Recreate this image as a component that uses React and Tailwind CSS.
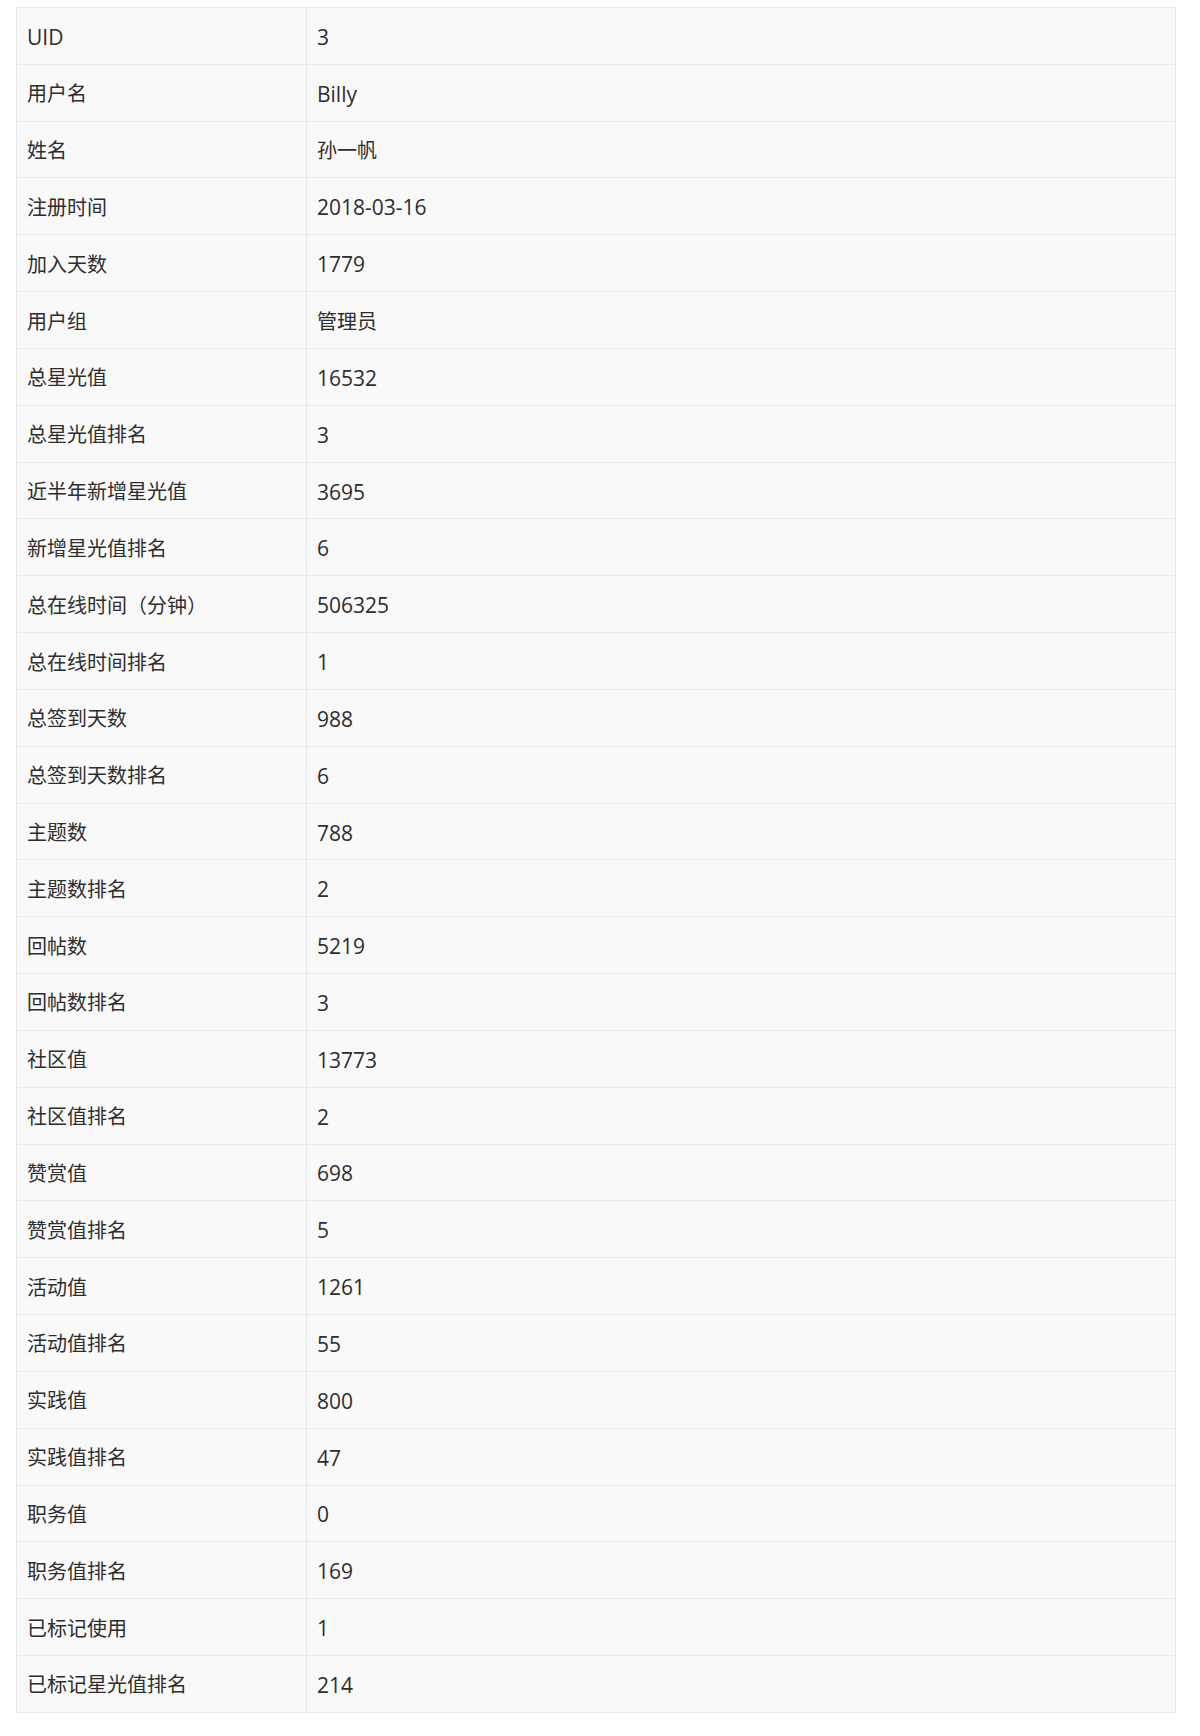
import React from "react";

const rows = [
  ["UID", "3"],
  ["用户名", "Billy"],
  ["姓名", "孙一帆"],
  ["注册时间", "2018-03-16"],
  ["加入天数", "1779"],
  ["用户组", "管理员"],
  ["总星光值", "16532"],
  ["总星光值排名", "3"],
  ["近半年新增星光值", "3695"],
  ["新增星光值排名", "6"],
  ["总在线时间（分钟）", "506325"],
  ["总在线时间排名", "1"],
  ["总签到天数", "988"],
  ["总签到天数排名", "6"],
  ["主题数", "788"],
  ["主题数排名", "2"],
  ["回帖数", "5219"],
  ["回帖数排名", "3"],
  ["社区值", "13773"],
  ["社区值排名", "2"],
  ["赞赏值", "698"],
  ["赞赏值排名", "5"],
  ["活动值", "1261"],
  ["活动值排名", "55"],
  ["实践值", "800"],
  ["实践值排名", "47"],
  ["职务值", "0"],
  ["职务值排名", "169"],
  ["已标记使用", "1"],
  ["已标记星光值排名", "214"],
];

// latin text renders a touch bigger than the CJK text in the original
const Cell = ({ text }) => {
  const latin = /^[\x00-\x7f]+$/.test(text);
  return <span className={latin ? "text-[21px]" : "text-[20px]"}>{text}</span>;
};

const App = () => {
  return (
    <div
      className="bg-white w-[1200px] h-[1736px] pt-[7px] pl-[16px]"
      style={{ fontFamily: '"Open Sans", "Noto Sans CJK SC", sans-serif' }}
    >
      <table className="border-collapse w-[1160px] text-[#2e2e2e] leading-none">
        <tbody>
          {rows.map(([label, value]) => (
            <tr key={label} className="h-[56.83px] bg-[#f9f9f9]">
              <td className="w-[290px] border border-[#e9e9e9] px-[10px] pt-[3px] pb-0 align-middle">
                <Cell text={label} />
              </td>
              <td className="border border-[#e9e9e9] px-[10px] pt-[3px] pb-0 align-middle">
                <Cell text={value} />
              </td>
            </tr>
          ))}
        </tbody>
      </table>
    </div>
  );
};

export default App;
